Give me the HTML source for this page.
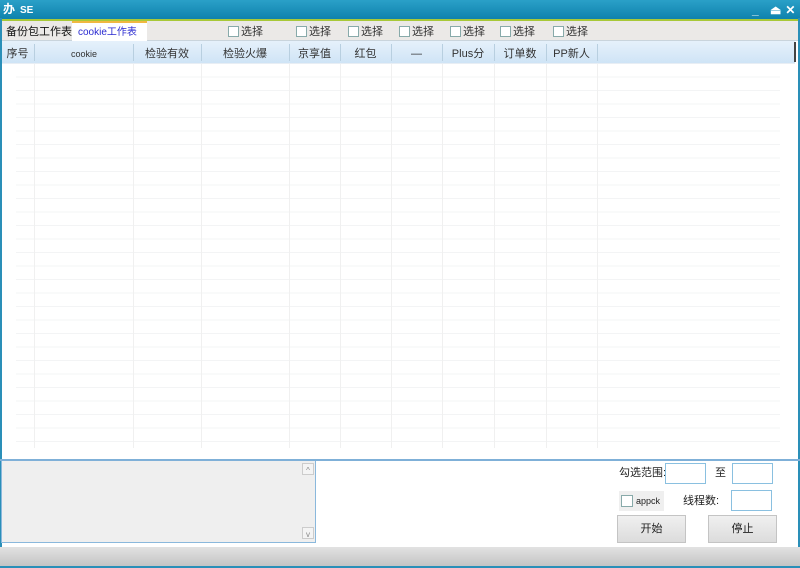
<!DOCTYPE html>
<html><head><meta charset="utf-8"><style>
*{margin:0;padding:0;box-sizing:border-box}
body{width:800px;height:568px;overflow:hidden;background:#fff;font-family:"Liberation Sans","Noto Sans CJK SC",sans-serif;font-size:11px;line-height:13px;color:#222;position:relative}
.a{position:absolute}
#title{left:0;top:0;width:800px;height:19px;background:linear-gradient(#2aa0c8,#0f82ad);}
#yl{left:0;top:19px;width:800px;height:2px;background:#a8c838}
#tb{left:0;top:21px;width:800px;height:20px;background:#ebe9e7;border-bottom:1px solid #c9d4dc}
.cb{position:absolute;top:5px;width:11px;height:11px;border:1px solid #8aa;background:#fff}
.cl{position:absolute;top:5px;font-size:11px;color:#333}
#hdr{left:1px;top:41px;width:794px;height:23px;background:linear-gradient(#e6f1fb,#cfe4f6);border-bottom:1px solid #e8eef4}
.h{position:absolute;top:7px;font-size:11px;color:#333;text-align:center}
.vs{position:absolute;top:3px;width:1px;height:17px;background:#b8cfe0}
#grid{left:16px;top:64px;width:764px;height:384px;background:repeating-linear-gradient(to bottom,transparent 0,transparent 12.5px,#f3f4f5 12.5px,#f3f4f5 13.5px)}
.gv{position:absolute;top:64px;width:1px;height:384px;background:#f0f0f0}
</style></head><body>
<div class="a" id="title"></div>
<div class="a" style="left:3px;top:3px;color:#fff;font-size:12px;font-weight:bold">办</div>
<div class="a" style="left:20px;top:4px;color:#fff;font-size:10px;font-weight:bold">SE</div>
<div class="a" style="left:752px;top:4px;color:#fff;font-size:12px;font-weight:bold;letter-spacing:4px">_ ⏏✕</div>
<div class="a" id="yl"></div>
<div class="a" id="tb">
<div class="cl" style="left:6px;color:#111">备份包工作表</div>
<div style="position:absolute;left:72px;top:0;width:75px;height:20px;background:#fff;border-top:2px solid #f0b840"></div>
<div class="cl" style="left:78px;color:#2a2ad0;font-size:10px">cookie工作表</div>
<div class="cb" style="left:228px"></div><div class="cl" style="left:241px">选择</div>
<div class="cb" style="left:296px"></div><div class="cl" style="left:309px">选择</div>
<div class="cb" style="left:348px"></div><div class="cl" style="left:361px">选择</div>
<div class="cb" style="left:399px"></div><div class="cl" style="left:412px">选择</div>
<div class="cb" style="left:450px"></div><div class="cl" style="left:463px">选择</div>
<div class="cb" style="left:500px"></div><div class="cl" style="left:513px">选择</div>
<div class="cb" style="left:553px"></div><div class="cl" style="left:566px">选择</div>
</div>
<div class="a" id="hdr">
<div class="h" style="left:0;width:33px">序号</div><div class="vs" style="left:33px"></div>
<div class="h" style="left:33px;width:100px;font-size:9px">cookie</div><div class="vs" style="left:132px"></div>
<div class="h" style="left:132px;width:68px">检验有效</div><div class="vs" style="left:200px"></div>
<div class="h" style="left:200px;width:88px">检验火爆</div><div class="vs" style="left:288px"></div>
<div class="h" style="left:288px;width:51px">京享值</div><div class="vs" style="left:339px"></div>
<div class="h" style="left:339px;width:51px">红包</div><div class="vs" style="left:390px"></div>
<div class="h" style="left:390px;width:51px">—</div><div class="vs" style="left:441px"></div>
<div class="h" style="left:441px;width:52px">Plus分</div><div class="vs" style="left:493px"></div>
<div class="h" style="left:493px;width:52px">订单数</div><div class="vs" style="left:545px"></div>
<div class="h" style="left:545px;width:51px">PP新人</div><div class="vs" style="left:596px"></div>
</div>
<div class="a" style="left:794px;top:42px;width:2px;height:20px;background:#444"></div>
<div class="a" id="grid"></div>
<div class="gv" style="left:34px"></div><div class="gv" style="left:133px"></div><div class="gv" style="left:201px"></div><div class="gv" style="left:289px"></div><div class="gv" style="left:340px"></div><div class="gv" style="left:391px"></div><div class="gv" style="left:442px"></div><div class="gv" style="left:494px"></div><div class="gv" style="left:546px"></div><div class="gv" style="left:597px"></div>
<div class="a" style="left:0;top:18px;width:2px;height:550px;background:#2a8fb8"></div>
<div class="a" style="left:798px;top:18px;width:2px;height:550px;background:#2a8fb8"></div>
<div class="a" style="left:0;top:459px;width:800px;height:2px;background:#7fb0d8"></div>
<div class="a" style="left:1px;top:461px;width:315px;height:82px;background:#efefef;border:1px solid #8ab8dc;border-top:none"></div>
<div class="a" style="left:302px;top:463px;width:12px;height:12px;border:1px solid #ccc;background:#f4f4f4;font-size:8px;text-align:center;color:#888">^</div>
<div class="a" style="left:302px;top:527px;width:12px;height:12px;border:1px solid #ccc;background:#f4f4f4;font-size:8px;text-align:center;color:#888">v</div>
<div class="a" style="left:619px;top:467px">勾选范围:</div>
<div class="a" style="left:665px;top:463px;width:41px;height:21px;border:1px solid #8ac0e0;background:#fff"></div>
<div class="a" style="left:715px;top:467px">至</div>
<div class="a" style="left:732px;top:463px;width:41px;height:21px;border:1px solid #8ac0e0;background:#fff"></div>
<div class="a" style="left:619px;top:491px;width:45px;height:20px;background:#efefef"></div>
<div class="a" style="left:621px;top:495px;width:12px;height:12px;border:1px solid #8aa;background:#fff"></div>
<div class="a" style="left:636px;top:495px;font-size:9px">appck</div>
<div class="a" style="left:683px;top:495px">线程数:</div>
<div class="a" style="left:731px;top:490px;width:41px;height:21px;border:1px solid #8ac0e0;background:#fff"></div>
<div class="a" style="left:617px;top:515px;width:69px;height:28px;border:1px solid #c4c4c4;background:linear-gradient(#f0f0f0,#dcdcdc);text-align:center;line-height:27px">开始</div>
<div class="a" style="left:708px;top:515px;width:69px;height:28px;border:1px solid #c4c4c4;background:linear-gradient(#f0f0f0,#dcdcdc);text-align:center;line-height:27px">停止</div>
<div class="a" style="left:0;top:547px;width:800px;height:19px;background:linear-gradient(#e2e2e2,#c4c4c4)"></div>
<div class="a" style="left:0;top:566px;width:800px;height:2px;background:#2a8fb8"></div>
</body></html>
